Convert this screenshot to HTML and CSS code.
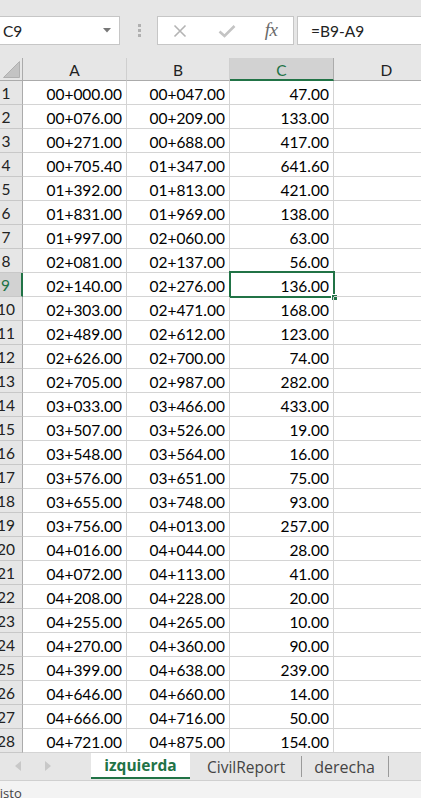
FILE: index.html
```html
<!DOCTYPE html>
<html lang="es">
<head>
<meta charset="utf-8">
<title>Hoja</title>
<link rel="stylesheet" href="styles.css">
</head>
<body>
<div class="app">
  <div class="toolbar">
    <div class="namebox"><span class="nb-text">C9</span><svg class="nb-arrow" width="8" height="5" viewBox="0 0 8 5"><path d="M0 0H8L4 4.5Z" fill="#777"/></svg></div>
    <div class="dots"><i></i><i></i><i></i></div>
    <div class="btnbox">
      <span class="btn btn-x"><svg width="14" height="14" viewBox="0 0 14 14"><path d="M1.5 1.5L12.5 12.5M12.5 1.5L1.5 12.5" stroke="#b4b4b4" stroke-width="1.6" fill="none"/></svg></span>
      <span class="btn btn-ok"><svg width="18" height="14" viewBox="0 0 18 14"><path d="M1.5 7.5L6.5 12L16.5 2" stroke="#c4c4c4" stroke-width="2.6" fill="none"/></svg></span>
      <span class="btn btn-fx">fx</span>
    </div>
    <div class="formula">=B9-A9</div>
  </div>

  <div class="sheet">
    <div class="row hdr">
      <div class="corner"><svg width="17" height="17" viewBox="0 0 17 17"><path d="M16.5 0.5V16.5H0.5Z" fill="#c3c3c3" stroke="#b0b0b0" stroke-width="1"/></svg></div>
      <div class="ch">A</div><div class="ch">B</div><div class="ch ch-sel">C</div><div class="ch">D</div>
    </div>
    <div class="row"><div class="rh">1</div><div class="c">00+000.00</div><div class="c">00+047.00</div><div class="c">47.00</div><div class="c"></div></div>
    <div class="row"><div class="rh">2</div><div class="c">00+076.00</div><div class="c">00+209.00</div><div class="c">133.00</div><div class="c"></div></div>
    <div class="row"><div class="rh">3</div><div class="c">00+271.00</div><div class="c">00+688.00</div><div class="c">417.00</div><div class="c"></div></div>
    <div class="row"><div class="rh">4</div><div class="c">00+705.40</div><div class="c">01+347.00</div><div class="c">641.60</div><div class="c"></div></div>
    <div class="row"><div class="rh">5</div><div class="c">01+392.00</div><div class="c">01+813.00</div><div class="c">421.00</div><div class="c"></div></div>
    <div class="row"><div class="rh">6</div><div class="c">01+831.00</div><div class="c">01+969.00</div><div class="c">138.00</div><div class="c"></div></div>
    <div class="row"><div class="rh">7</div><div class="c">01+997.00</div><div class="c">02+060.00</div><div class="c">63.00</div><div class="c"></div></div>
    <div class="row"><div class="rh">8</div><div class="c">02+081.00</div><div class="c">02+137.00</div><div class="c">56.00</div><div class="c"></div></div>
    <div class="row"><div class="rh rh-sel">9</div><div class="c">02+140.00</div><div class="c">02+276.00</div><div class="c c-sel">136.00<span class="selbox"></span><span class="handle"></span></div><div class="c"></div></div>
    <div class="row"><div class="rh">10</div><div class="c">02+303.00</div><div class="c">02+471.00</div><div class="c">168.00</div><div class="c"></div></div>
    <div class="row"><div class="rh">11</div><div class="c">02+489.00</div><div class="c">02+612.00</div><div class="c">123.00</div><div class="c"></div></div>
    <div class="row"><div class="rh">12</div><div class="c">02+626.00</div><div class="c">02+700.00</div><div class="c">74.00</div><div class="c"></div></div>
    <div class="row"><div class="rh">13</div><div class="c">02+705.00</div><div class="c">02+987.00</div><div class="c">282.00</div><div class="c"></div></div>
    <div class="row"><div class="rh">14</div><div class="c">03+033.00</div><div class="c">03+466.00</div><div class="c">433.00</div><div class="c"></div></div>
    <div class="row"><div class="rh">15</div><div class="c">03+507.00</div><div class="c">03+526.00</div><div class="c">19.00</div><div class="c"></div></div>
    <div class="row"><div class="rh">16</div><div class="c">03+548.00</div><div class="c">03+564.00</div><div class="c">16.00</div><div class="c"></div></div>
    <div class="row"><div class="rh">17</div><div class="c">03+576.00</div><div class="c">03+651.00</div><div class="c">75.00</div><div class="c"></div></div>
    <div class="row"><div class="rh">18</div><div class="c">03+655.00</div><div class="c">03+748.00</div><div class="c">93.00</div><div class="c"></div></div>
    <div class="row"><div class="rh">19</div><div class="c">03+756.00</div><div class="c">04+013.00</div><div class="c">257.00</div><div class="c"></div></div>
    <div class="row"><div class="rh">20</div><div class="c">04+016.00</div><div class="c">04+044.00</div><div class="c">28.00</div><div class="c"></div></div>
    <div class="row"><div class="rh">21</div><div class="c">04+072.00</div><div class="c">04+113.00</div><div class="c">41.00</div><div class="c"></div></div>
    <div class="row"><div class="rh">22</div><div class="c">04+208.00</div><div class="c">04+228.00</div><div class="c">20.00</div><div class="c"></div></div>
    <div class="row"><div class="rh">23</div><div class="c">04+255.00</div><div class="c">04+265.00</div><div class="c">10.00</div><div class="c"></div></div>
    <div class="row"><div class="rh">24</div><div class="c">04+270.00</div><div class="c">04+360.00</div><div class="c">90.00</div><div class="c"></div></div>
    <div class="row"><div class="rh">25</div><div class="c">04+399.00</div><div class="c">04+638.00</div><div class="c">239.00</div><div class="c"></div></div>
    <div class="row"><div class="rh">26</div><div class="c">04+646.00</div><div class="c">04+660.00</div><div class="c">14.00</div><div class="c"></div></div>
    <div class="row"><div class="rh">27</div><div class="c">04+666.00</div><div class="c">04+716.00</div><div class="c">50.00</div><div class="c"></div></div>
    <div class="row"><div class="rh">28</div><div class="c">04+721.00</div><div class="c">04+875.00</div><div class="c">154.00</div><div class="c"></div></div>
  </div>

  <div class="tabbar">
    <div class="navs">
      <svg width="6" height="10" viewBox="0 0 6 10"><path d="M6 0V10L0 5Z" fill="#c8c8c8"/></svg>
      <svg width="6" height="10" viewBox="0 0 6 10"><path d="M0 0V10L6 5Z" fill="#c8c8c8"/></svg>
    </div>
    <div class="tab tab-active">izquierda</div>
    <div class="tab tab-civil">CivilReport</div>
    <div class="tab tab-der">derecha</div>
  </div>
  <div class="status"><span class="status-text">Listo</span></div>
</div>
</body>
</html>
```

FILE: styles.css
```css
* { box-sizing: border-box; }
html, body {
  margin: 0;
  padding: 0;
}
body {
  width: 421px;
  height: 798px;
  overflow: hidden;
  background: #e6e6e6;
  font-family: Lato, "Open Sans", sans-serif;
  color: #000;
}
.app {
  width: 421px;
  height: 798px;
  overflow: hidden;
  display: flex;
  flex-direction: column;
}

/* formula toolbar */
.toolbar {
  height: 58px;
  flex: none;
  display: flex;
  align-items: flex-start;
  padding-top: 16px;
}
.namebox {
  width: 121px;
  height: 29px;
  margin-left: -1px;
  background: #fff;
  border: 1px solid #c6c6c6;
  display: flex;
  align-items: center;
  justify-content: space-between;
  padding: 0 8px 0 3px;
  font-size: 15.5px;
  color: #222;
}
.nb-text { padding-top: 1px; }
.dots {
  width: 37px;
  height: 29px;
  display: flex;
  flex-direction: column;
  align-items: center;
  justify-content: center;
  gap: 2px;
  padding-left: 2px;
}
.dots i {
  display: block;
  width: 3px;
  height: 3px;
  background: #b0b0b0;
}
.btnbox {
  width: 137px;
  height: 29px;
  background: #fff;
  border: 1px solid #c6c6c6;
  display: flex;
  align-items: center;
}
.btn {
  display: flex;
  align-items: center;
  justify-content: center;
  height: 27px;
}
.btn-x { width: 44px; }
.btn-ok { width: 50px; }
.btn-fx {
  width: 38px;
  font-family: "Liberation Serif", "DejaVu Serif", serif;
  font-style: italic;
  font-size: 19px;
  color: #6a6a6a;
  letter-spacing: -0.5px;
  padding-bottom: 2px;
}
.formula {
  flex: 1;
  margin-left: 3px;
  margin-right: -10px;
  height: 29px;
  background: #fff;
  border: 1px solid #c6c6c6;
  display: flex;
  align-items: center;
  padding-left: 13px;
  padding-top: 1px;
  font-size: 15.5px;
  color: #222;
}

/* sheet grid */
.sheet {
  flex: none;
  margin-left: -8px;
  width: 448px;
  background: #fff;
}
.row {
  display: grid;
  grid-template-columns: 31px 104px 103px 104px 106px;
  height: 24px;
}
.row.hdr {
  height: 23px;
  background: #e6e6e6;
}
.corner {
  border-right: 1px solid #ababab;
  border-bottom: 1px solid #ababab;
  display: flex;
  align-items: flex-end;
  justify-content: flex-end;
  padding: 0 2px 2px 0;
}
.ch {
  border-right: 1px solid #cfcfcf;
  border-bottom: 1px solid #ababab;
  display: flex;
  align-items: center;
  justify-content: center;
  font-size: 15.5px;
  color: #222;
  padding-top: 1px;
}
.ch-sel {
  background: #d2d2d2;
  color: #217346;
  border-bottom: 2px solid #217346;
  border-right-color: #ababab;
  padding-top: 2px;
}
.rh {
  background: #e6e6e6;
  border-right: 1px solid #ababab;
  border-bottom: 1px solid #c8c8c8;
  display: flex;
  align-items: center;
  justify-content: center;
  font-size: 15.5px;
  color: #222;
  padding: 1px 2px 0 0;
}
.rh-sel {
  background: #d2d2d2;
  color: #217346;
  border-right: 2px solid #217346;
}
.c {
  position: relative;
  border-right: 1px solid #d4d4d4;
  border-bottom: 1px solid #d4d4d4;
  display: flex;
  align-items: center;
  justify-content: flex-end;
  padding: 2px 4px 0 0;
  font-size: 15.5px;
  white-space: nowrap;
}
.selbox {
  position: absolute;
  left: -1px;
  top: -2px;
  right: -2px;
  bottom: -2px;
  border: 2px solid #217346;
  pointer-events: none;
}
.handle {
  position: absolute;
  right: -5px;
  bottom: -5px;
  width: 7px;
  height: 7px;
  background: #217346;
  border: 1px solid #fff;
}

/* sheet tabs */
.tabbar {
  flex: none;
  height: 28px;
  display: flex;
  align-items: flex-start;
  background: #e6e6e6;
  border-bottom: 1px solid #d0d0d0;
}
.navs {
  width: 91px;
  height: 25px;
  display: flex;
  align-items: center;
  gap: 24px;
  padding-left: 15px;
}
.tab {
  display: flex;
  align-items: center;
  font-family: "Open Sans", Lato, sans-serif;
  font-size: 15.5px;
  color: #444;
  border-right: 1px solid #9a9a9a;
  margin: 3px 0 0;
  height: 21px;
}
.tab-civil {
  padding: 0 16px 0 17px;
}
.tab-der {
  padding: 0 13px 0 12px;
  font-size: 16px;
}
.tab-active {
  margin: 0;
  height: 26px;
  width: 99px;
  justify-content: center;
  padding: 0;
  background: #fff;
  color: #217346;
  font-weight: bold;
  border-right: none;
  border-bottom: 2px solid #217346;
}
.status {
  flex: 1;
  background: #f3f3f3;
  overflow: hidden;
}
.status-text {
  display: block;
  margin-left: -7px;
  margin-top: 3px;
  font-family: "Open Sans", sans-serif;
  font-size: 13px;
  color: #444;
}
```
